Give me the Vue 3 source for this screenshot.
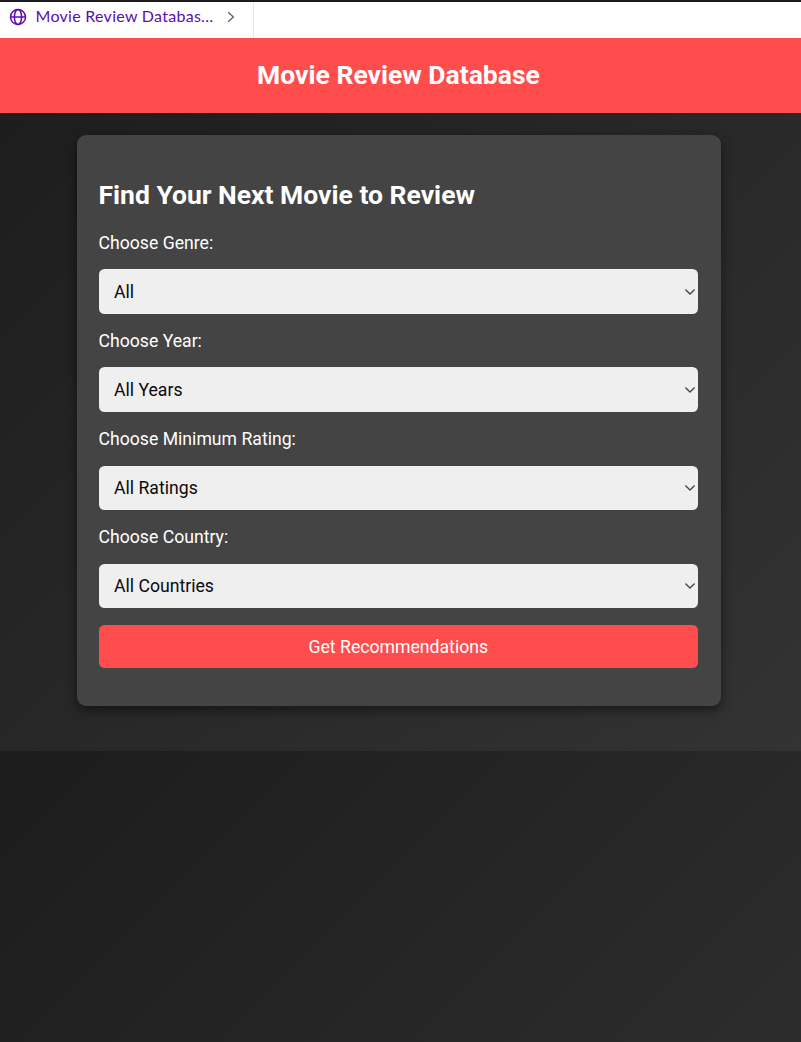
<script setup>
const filters = [
  { id: 'genre', label: 'Choose Genre:', option: 'All' },
  { id: 'year', label: 'Choose Year:', option: 'All Years' },
  { id: 'rating', label: 'Choose Minimum Rating:', option: 'All Ratings' },
  { id: 'country', label: 'Choose Country:', option: 'All Countries' },
]
</script>

<template>
  <div class="window">
    <nav class="tabs">
      <div class="tab">
        <svg class="globe" viewBox="0 0 18 18" fill="none" stroke="currentColor" stroke-width="1.5">
          <circle cx="9" cy="9" r="7.5" />
          <ellipse cx="9" cy="9" rx="3.6" ry="7.5" />
          <path d="M1.5 9h15" />
        </svg>
        <span class="tab-title">Movie Review Databas...</span>
        <svg class="next" viewBox="0 0 8 12" fill="none" stroke="currentColor" stroke-width="1.4">
          <path d="M1.2 1.2 6.4 6 1.2 10.8" />
        </svg>
      </div>
    </nav>
    <div class="page">
      <header class="banner"><h1>Movie Review Database</h1></header>
      <main class="card">
        <h2>Find Your Next Movie to Review</h2>
        <div v-for="f in filters" :key="f.id" class="field">
          <label :for="f.id">{{ f.label }}</label>
          <div class="select-box">
            <select :id="f.id"><option>{{ f.option }}</option></select>
            <svg class="chevron" viewBox="0 0 12 8" fill="none" stroke="currentColor" stroke-width="1.3">
              <path d="M1.4 1.5 6 6 10.6 1.5" />
            </svg>
          </div>
        </div>
        <button type="button">Get Recommendations</button>
      </main>
    </div>
  </div>
</template>

<style>
body {
  margin: 0;
  background: #202020;
}
</style>

<style scoped>
.window {
  box-sizing: border-box;
  height: 1042px;
  overflow: hidden;
  border-top: 2px solid #1c1a1e;
  font-family: Roboto, "Liberation Sans", sans-serif;
  display: flex;
  flex-direction: column;
}
.tabs {
  height: 36px;
  background: #fff;
  flex: none;
}
.tab {
  box-sizing: border-box;
  width: 254px;
  height: 36px;
  padding: 0 0 6px 9px;
  border-right: 1px solid #e6e6ea;
  display: flex;
  align-items: center;
  color: #5b0cb3;
}
.globe {
  width: 18px;
  height: 18px;
  flex: none;
}
.tab-title {
  box-sizing: border-box;
  width: 192px;
  padding: 0 0 3px 8.5px;
  font-family: Lato, sans-serif;
  font-size: 16px;
  letter-spacing: 0.28px;
  white-space: nowrap;
}
.next {
  width: 8px;
  height: 12px;
  margin-left: 8px;
  color: #65656f;
}
.page {
  flex: 1;
  background-image: linear-gradient(135deg, #1c1c1c, #333);
  background-size: 100% 713px;
}
.banner {
  box-sizing: border-box;
  height: 75.3px;
  padding-bottom: 2px;
  background: #ff4d4d;
  display: flex;
  align-items: center;
  justify-content: center;
}
h1 {
  margin: 0 4px 0 0;
  color: #fff;
  font-size: 26.5px;
  line-height: 31px;
}
.card {
  box-sizing: border-box;
  width: 644px;
  height: 570.8px;
  margin: 22.2px 0 0 76.5px;
  padding: 43.5px 22px 0;
  border-radius: 9px;
  background: #444;
  box-shadow: 0 4px 11px rgba(0, 0, 0, 0.5);
  color: #fff;
}
h2 {
  margin: 0 0 18.8px;
  font-size: 26.5px;
  line-height: 31px;
}
.field {
  height: 98.15px;
}
label {
  display: block;
  font-size: 17.65px;
  line-height: 21px;
  padding-top: 4px;
}
.select-box {
  position: relative;
  margin-top: 15.5px;
}
select {
  appearance: none;
  display: block;
  box-sizing: border-box;
  width: 599.6px;
  height: 44.6px;
  padding: 0 15.5px;
  border: 0;
  border-radius: 5.5px;
  background: #efefef;
  color: #0a0a0a;
  font-family: inherit;
  font-size: 17.65px;
}
.chevron {
  position: absolute;
  right: 3px;
  top: 18.5px;
  width: 12px;
  height: 8px;
  color: #444;
}
button {
  display: block;
  width: 599.6px;
  height: 42.7px;
  margin-top: 4px;
  padding: 0;
  border: 0;
  border-radius: 5.5px;
  background: #ff4d4d;
  color: #fff;
  font-family: inherit;
  font-size: 17.65px;
}
</style>
